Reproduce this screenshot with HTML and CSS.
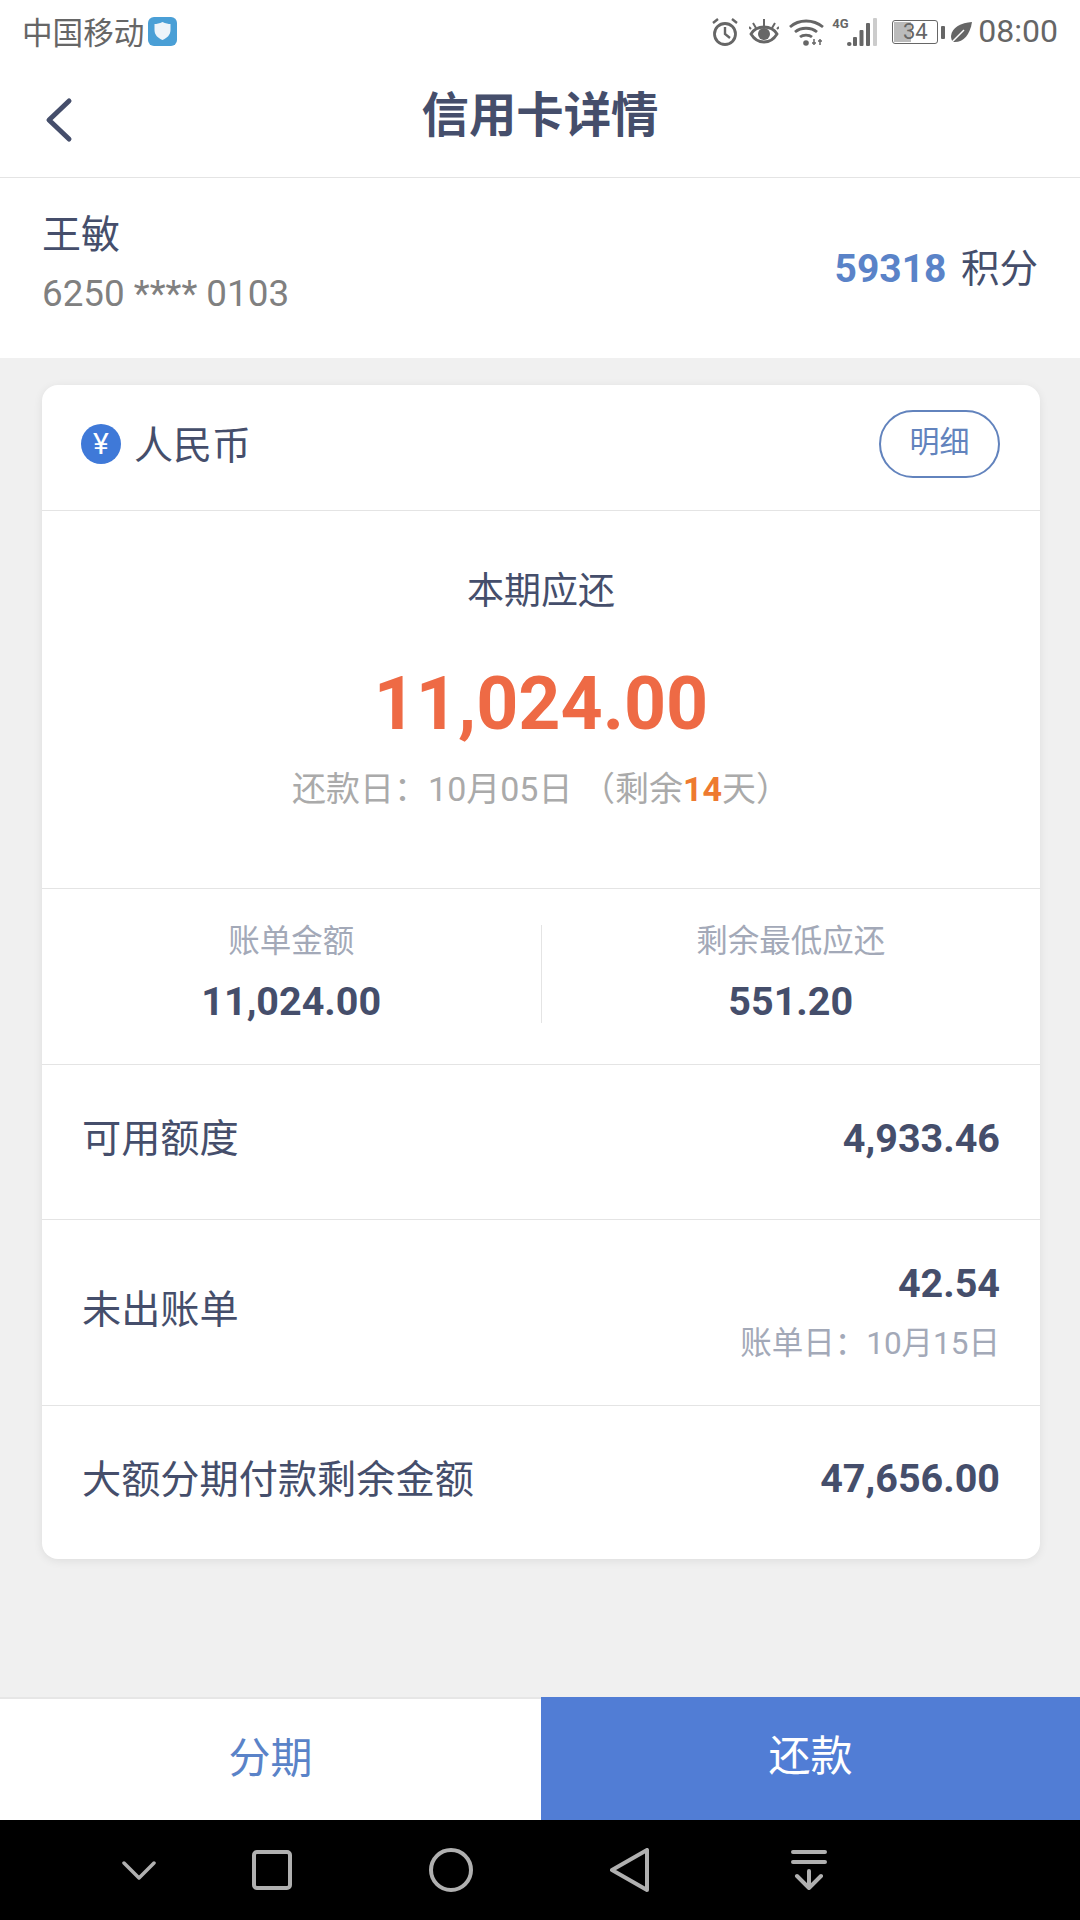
FILE: index.html
```html
<!DOCTYPE html>
<html lang="zh-CN">
<head>
  <meta charset="UTF-8" />
  <meta name="viewport" content="width=device-width, initial-scale=1.0" />
  <title>信用卡详情</title>
  <link rel="stylesheet" href="styles.css">
</head>
<body>
  <!-- Status bar -->
  <div class="status-bar">
    <div class="status-left">
      <span>中国移动</span>
      <svg class="shield" width="29" height="29" viewBox="0 0 29 29">
        <rect width="29" height="29" rx="6" fill="#4a9fd6"/>
        <path d="M14.500 5c3 1.500 6 2 8 2v6c0 5-3.500 8-8 10-4.500-2-8-5-8-10V7c2 0 5-.5 8-2z" fill="#eef4fa"/>
      </svg>
    </div>
    <div class="status-right">
      <svg class="st-alarm" width="28" height="29" viewBox="0 0 28 29" fill="none" stroke="#666" stroke-width="2.800">
        <circle cx="14" cy="17" r="10.500"/>
        <path d="M14 10v7l5 4" stroke-width="2.400"/>
        <path d="M2 6l5-4M26 6l-5-4" stroke-width="2.400"/>
      </svg>
      <svg class="st-eye" width="30" height="25" viewBox="0 0 30 25" fill="none" stroke="#666" stroke-width="2.800">
        <path d="M2 15c3-5 8-7 13-7s10 2 13 7c-3 5-8 8-13 8S5 20 2 15z"/>
        <circle cx="15" cy="15" r="6" fill="#666" stroke="none"/>
        <path d="M15 7V0M7 9L4 4M23 9l3-5M2 10L0 8M28 10l2-2" stroke-width="2"/>
      </svg>
      <svg class="st-wifi" width="35" height="28" viewBox="0 0 35 28" fill="none" stroke="#666" stroke-width="2.800">
        <path d="M1 9c9-8 23-8 33 0M6 14c6-5 16-5 22 0M11 19c3-2.500 9-2.500 12 0"/>
        <circle cx="17" cy="25" r="2.800" fill="#666" stroke="none"/>
        <path d="M25 21v6M23 25h4M31 21v6M29 23h4" stroke-width="1.500"/>
      </svg>
      <div class="signal">
        <span class="signal-tag">4G</span>
        <svg width="31" height="29" viewBox="0 0 31 29" fill="#666">
          <rect x="0" y="25" width="4.500" height="4" rx="2"/>
          <rect x="6" y="20" width="4" height="9" rx="1"/>
          <rect x="12.500" y="13" width="4" height="16" rx="1"/>
          <rect x="19" y="6" width="4" height="23" rx="1"/>
          <rect x="26" y="1" width="4" height="28" rx="1" fill="#ccc"/>
        </svg>
      </div>
      <div class="battery">
        <div class="battery-body">
          <span class="battery-level"></span>
          <span class="battery-num">34</span>
        </div>
        <span class="battery-tip"></span>
      </div>
      <svg class="st-leaf" width="21" height="21" viewBox="0 0 21 21">
        <path d="M21 0C10 1 1 5 0 14c0 3 1 5 2 6 10 1 17-7 19-20z" fill="#666"/>
        <path d="M0 21L13 8" stroke="#fff" stroke-width="1.500"/>
      </svg>
      <span class="clock">08:00</span>
    </div>
  </div>

  <!-- Title -->
  <header class="title-bar">
    <svg class="back" width="30" height="48" viewBox="0 0 30 48" fill="none">
      <path d="M25 5L5 24l20 19" stroke="#454e6b" stroke-width="5" stroke-linecap="round" stroke-linejoin="round"/>
    </svg>
    <h1>信用卡详情</h1>
  </header>

  <!-- Card holder -->
  <section class="holder">
    <div>
      <div class="holder-name">王敏</div>
      <div class="holder-card">6250 **** 0103</div>
    </div>
    <div class="points"><b>59318</b> 积分</div>
  </section>

  <main class="content">
    <div class="card">
      <div class="card-head">
        <div class="currency">
          <span class="yen">¥</span>
          <span class="currency-name">人民币</span>
        </div>
        <span class="detail-btn">明细</span>
      </div>

      <div class="due">
        <div class="due-label">本期应还</div>
        <div class="due-amount">11,024.00</div>
        <div class="due-date">还款日：10月05日 （剩余<b>14</b>天）</div>
      </div>

      <div class="split">
        <div class="split-item">
          <div class="split-label">账单金额</div>
          <div class="split-value">11,024.00</div>
        </div>
        <div class="split-item">
          <div class="split-label">剩余最低应还</div>
          <div class="split-value">551.20</div>
        </div>
      </div>

      <div class="row row-limit">
        <span class="row-label">可用额度</span>
        <span class="row-value">4,933.46</span>
      </div>
      <div class="row row-unbilled">
        <span class="row-label">未出账单</span>
        <div class="row-right">
          <div class="row-value">42.54</div>
          <div class="row-note">账单日：10月15日</div>
        </div>
      </div>
      <div class="row row-large">
        <span class="row-label">大额分期付款剩余金额</span>
        <span class="row-value">47,656.00</span>
      </div>
    </div>
  </main>

  <!-- Actions -->
  <div class="actions">
    <div class="action action-plain">分期</div>
    <div class="action action-main">还款</div>
  </div>

  <!-- Navigation keys -->
  <nav class="nav-bar">
    <svg class="key-hide" width="34" height="19" viewBox="0 0 34 19" fill="none" stroke="#b0b0b0" stroke-width="3.500" stroke-linecap="round" stroke-linejoin="round">
      <path d="M2 2l15 15L32 2"/>
    </svg>
    <svg class="key-recent" width="40" height="40" viewBox="0 0 40 40" fill="none" stroke="#b0b0b0" stroke-width="4">
      <rect x="2" y="2" width="36" height="36" rx="3"/>
    </svg>
    <svg class="key-home" width="44" height="44" viewBox="0 0 44 44" fill="none" stroke="#b0b0b0" stroke-width="4">
      <circle cx="22" cy="22" r="20"/>
    </svg>
    <svg class="key-back" width="39" height="44" viewBox="0 0 39 44" fill="none" stroke="#b0b0b0" stroke-width="4" stroke-linejoin="round">
      <path d="M37 2v40L2 22z"/>
    </svg>
    <svg class="key-shade" width="36" height="40" viewBox="0 0 36 40" fill="none" stroke="#b0b0b0" stroke-width="4" stroke-linecap="round" stroke-linejoin="round">
      <path d="M2 2h32M2 12h32M18 21v17M6 26l12 12 12-12"/>
    </svg>
  </nav>
</body>
</html>
```

FILE: styles.css
```css
* {
  box-sizing: border-box;
}
body {
  margin: 0;
  width: 1080px;
  height: 1920px;
  display: flex;
  flex-direction: column;
  background: #f0f0f0;
  font-family: "Roboto", "Noto Sans CJK SC", sans-serif;
  color: #454e6b;
}
.status-bar {
  height: 62px;
  padding: 0 22px 0 22px;
  display: flex;
  justify-content: space-between;
  align-items: center;
  background: #fff;
  color: #666;
  font-size: 30.600px;
}
.status-left, .status-right {
  display: flex;
  align-items: center;
}
.shield {
  margin-left: 4px;
}
.st-eye, .st-wifi {
  margin-left: 10px;
}
.st-wifi {
  margin-top: 2px;
}
.signal {
  display: flex;
  align-items: flex-start;
  margin-left: 8px;
}
.signal-tag {
  width: 15px;
  font-size: 13px;
  line-height: 13px;
  font-weight: 700;
  white-space: nowrap;
}
.battery {
  display: flex;
  align-items: center;
  margin-left: 14px;
  margin-top: 2px;
}
.battery-body {
  position: relative;
  width: 46px;
  height: 24px;
  border: 1.500px solid #666;
  border-radius: 3px;
  text-align: center;
  font-size: 22px;
  line-height: 21px;
}
.battery-level {
  position: absolute;
  left: 1px;
  top: 1px;
  bottom: 1px;
  width: 38%;
  background: #bbb;
}
.battery-num {
  position: relative;
}
.battery-tip {
  width: 4px;
  height: 13px;
  margin-left: 3px;
  border-radius: 1px;
  background: #666;
}
.st-leaf {
  margin-left: 6px;
  margin-top: 2px;
}
.clock {
  font-size: 32px;
  margin-left: 6px;
}
.title-bar {
  position: relative;
  height: 116px;
  display: flex;
  align-items: center;
  justify-content: center;
  background: #fff;
  border-bottom: 1px solid #e4e4e4;
}
.back {
  position: absolute;
  left: 44px;
  top: 34px;
}
.title-bar h1 {
  margin: 0 0 16px;
  font-size: 47.400px;
  font-weight: 700;
}
.holder {
  height: 180px;
  padding: 0 42px 6px 42px;
  display: flex;
  justify-content: space-between;
  align-items: center;
  background: #fff;
}
.holder-name {
  font-size: 39px;
  line-height: 58px;
}
.holder-card {
  font-size: 36.800px;
  line-height: 60px;
  color: #808080;
}
.points {
  font-size: 38.500px;
}
.points b {
  margin-right: 5px;
  color: #5a83c8;
  font-size: 39px;
}
.content {
  flex: 1;
  padding: 27px 40px 0 42px;
}
.card {
  background: #fff;
  border-radius: 16px;
  box-shadow: 0 2px 10px rgba(0, 0, 0, 0.08);
}
.card-head {
  height: 126px;
  padding: 0 40px 8px 39px;
  display: flex;
  justify-content: space-between;
  align-items: center;
  font-size: 39px;
  border-bottom: 1px solid #e4e4e4;
}
.currency {
  display: flex;
  align-items: center;
  gap: 13px;
}
.currency-name {
  margin-bottom: 4px;
}
.yen {
  width: 40px;
  height: 40px;
  border-radius: 50%;
  background: #3f79d8;
  color: #fff;
  font-size: 30px;
  line-height: 40px;
  text-align: center;
}
.detail-btn {
  width: 121px;
  height: 68px;
  border: 2.500px solid #6283bd;
  border-radius: 34px;
  color: #6283bd;
  font-size: 30px;
  line-height: 60px;
  text-align: center;
}
.due {
  height: 378px;
  padding-top: 56px;
  text-align: center;
  border-bottom: 1px solid #e4e4e4;
}
.due-label {
  font-size: 37px;
  line-height: 50px;
}
.due-amount {
  margin-top: 42px;
  font-size: 73.500px;
  line-height: 90px;
  font-weight: 700;
  color: #ee6a45;
}
.due-date {
  margin-top: 17px;
  font-size: 34px;
  line-height: 46px;
  color: #aaa;
}
.due-date b {
  color: #ee7a30;
}
.split {
  height: 176px;
  padding-bottom: 5px;
  display: flex;
  align-items: center;
  border-bottom: 1px solid #e4e4e4;
}
.split-item {
  flex: 1;
  height: 98px;
  text-align: center;
}
.split-item + .split-item {
  border-left: 1px solid #e4e4e4;
}
.split-label {
  font-size: 31.500px;
  line-height: 33px;
  color: #a3a9b8;
}
.split-value {
  margin-top: 20px;
  font-size: 39.500px;
  line-height: 48px;
  font-weight: 700;
}
.row {
  padding: 0 40px;
  display: flex;
  justify-content: space-between;
  align-items: center;
  border-bottom: 1px solid #e4e4e4;
}
.row:last-child {
  border-bottom: none;
}
.row-limit {
  height: 155px;
}
.row-unbilled {
  height: 186px;
}
.row-large {
  height: 153px;
}
.row-label {
  font-size: 39.200px;
  margin-bottom: 14px;
}
.row-value {
  font-size: 39.500px;
  font-weight: 700;
}
.row-limit .row-value, .row-large .row-value {
  margin-bottom: 8px;
}
.row-right {
  text-align: right;
  margin-bottom: 3px;
}
.row-note {
  margin-top: 10px;
  font-size: 31.500px;
  color: #a3a9b8;
}
.actions {
  height: 123px;
  display: flex;
  font-size: 42px;
  line-height: 120px;
  text-align: center;
}
.action-plain {
  width: 541px;
  background: #fff;
  color: #5a83c8;
  border-top: 2px solid #e6e6e6;
}
.action-main {
  flex: 1;
  background: #517dd5;
  color: #fff;
}
.nav-bar {
  height: 100px;
  padding-left: 122px;
  display: flex;
  align-items: center;
  background: #000;
}
.key-recent {
  margin-left: 96px;
}
.key-home {
  margin-left: 137px;
}
.key-back {
  margin-left: 137px;
}
.key-shade {
  margin-left: 142px;
}
```
